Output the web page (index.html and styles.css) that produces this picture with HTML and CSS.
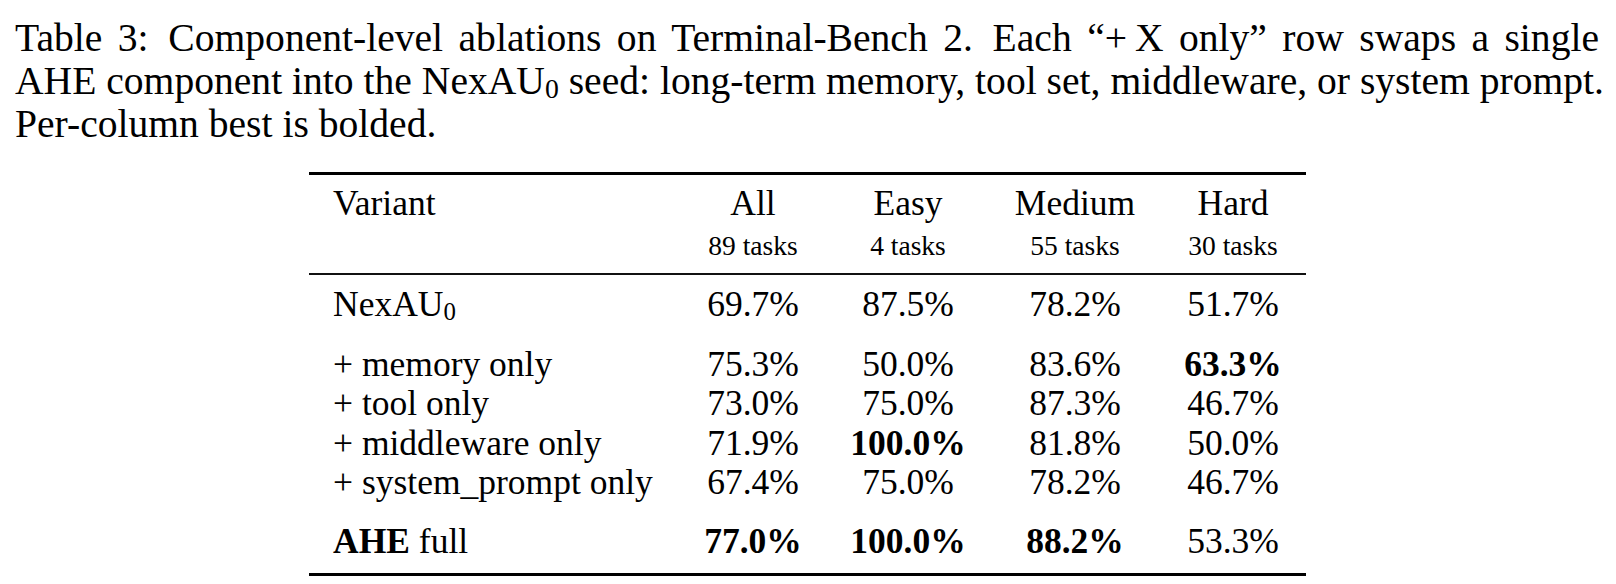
FILE: index.html
```html
<!DOCTYPE html>
<html lang="en">
<head>
<meta charset="utf-8">
<title>Table 3: Component-level ablations</title>
<link rel="stylesheet" href="styles.css">
</head>
<body>
<div class="page">
  <p class="caption">
    <span class="line just first">Table 3:&ensp;Component-level ablations on Terminal-Bench 2.&ensp;Each “+&#8201;X only” row swaps a single</span>
    <span class="line just second">AHE component into the NexAU<sub>0</sub> seed: long-term memory, tool set, middleware, or system prompt.</span>
    <span class="line">Per-column best is bolded.</span>
  </p>
  <table class="ablation">
    <colgroup>
      <col class="c-variant">
      <col class="c-all">
      <col class="c-easy">
      <col class="c-medium">
      <col class="c-hard">
    </colgroup>
    <thead>
      <tr>
        <th class="name"><span class="head">Variant</span></th>
        <th><span class="head">All</span><span class="sub">89 tasks</span></th>
        <th><span class="head">Easy</span><span class="sub">4 tasks</span></th>
        <th><span class="head">Medium</span><span class="sub">55 tasks</span></th>
        <th><span class="head">Hard</span><span class="sub">30 tasks</span></th>
      </tr>
    </thead>
    <tbody class="base">
      <tr><td>NexAU<sub>0</sub></td><td>69.7%</td><td>87.5%</td><td>78.2%</td><td>51.7%</td></tr>
    </tbody>
    <tbody class="variants">
      <tr><td>+ memory only</td><td>75.3%</td><td>50.0%</td><td>83.6%</td><td><b>63.3%</b></td></tr>
      <tr><td>+ tool only</td><td>73.0%</td><td>75.0%</td><td>87.3%</td><td>46.7%</td></tr>
      <tr><td>+ middleware only</td><td>71.9%</td><td><b>100.0%</b></td><td>81.8%</td><td>50.0%</td></tr>
      <tr><td>+ system_prompt only</td><td>67.4%</td><td>75.0%</td><td>78.2%</td><td>46.7%</td></tr>
    </tbody>
    <tbody class="full">
      <tr><td><b>AHE</b> full</td><td><b>77.0%</b></td><td><b>100.0%</b></td><td><b>88.2%</b></td><td>53.3%</td></tr>
    </tbody>
  </table>
</div>
</body>
</html>
```
FILE: styles.css
```css
html, body {
  margin: 0;
  padding: 0;
  background: #ffffff;
  color: #000000;
}

.page {
  width: 1585px;
  padding: 17px 0 0 15px;
  font-family: "Liberation Serif", "Times New Roman", serif;
}

.caption {
  margin: 0;
  font-size: 39.6px;
  line-height: 43px;
}

.caption .line {
  display: block;
}

.caption .just {
  text-align: justify;
  text-align-last: justify;
}

.caption .first {
  padding-right: 1px;
}

.caption .second {
  margin-right: -4px;
  word-spacing: -3px;
}

sub {
  font-size: 0.7em;
  vertical-align: -0.15em;
  line-height: 0;
}

.ablation {
  margin: 26px auto 0;
  width: 997px;
  table-layout: fixed;
  border-collapse: separate;
  border-spacing: 0;
  border-top: 3px solid #000;
  border-bottom: 3px solid #000;
  font-size: 35.5px;
  line-height: 39.5px;
}

.c-variant { width: 371px; }
.c-all { width: 146px; }
.c-easy { width: 164px; }
.c-medium { width: 170px; }
.c-hard { width: 146px; }

.ablation th,
.ablation td {
  padding: 0;
  text-align: center;
  vertical-align: top;
  font-weight: normal;
  white-space: nowrap;
}

.ablation th:first-child,
.ablation td:first-child {
  text-align: left;
  padding-left: 24px;
}

.ablation thead th {
  padding-top: 9px;
  padding-bottom: 5.5px;
  border-bottom: 2px solid #111;
}

.ablation .head {
  display: block;
  line-height: 39.5px;
}

.ablation .sub {
  display: block;
  font-size: 27.5px;
  line-height: 44px;
}

.ablation .base td {
  padding-top: 10px;
}

.ablation .variants tr:first-child td {
  padding-top: 20px;
}

.ablation .full td {
  padding-top: 19.5px;
  padding-bottom: 11px;
}

.ablation b {
  font-weight: bold;
}
```
